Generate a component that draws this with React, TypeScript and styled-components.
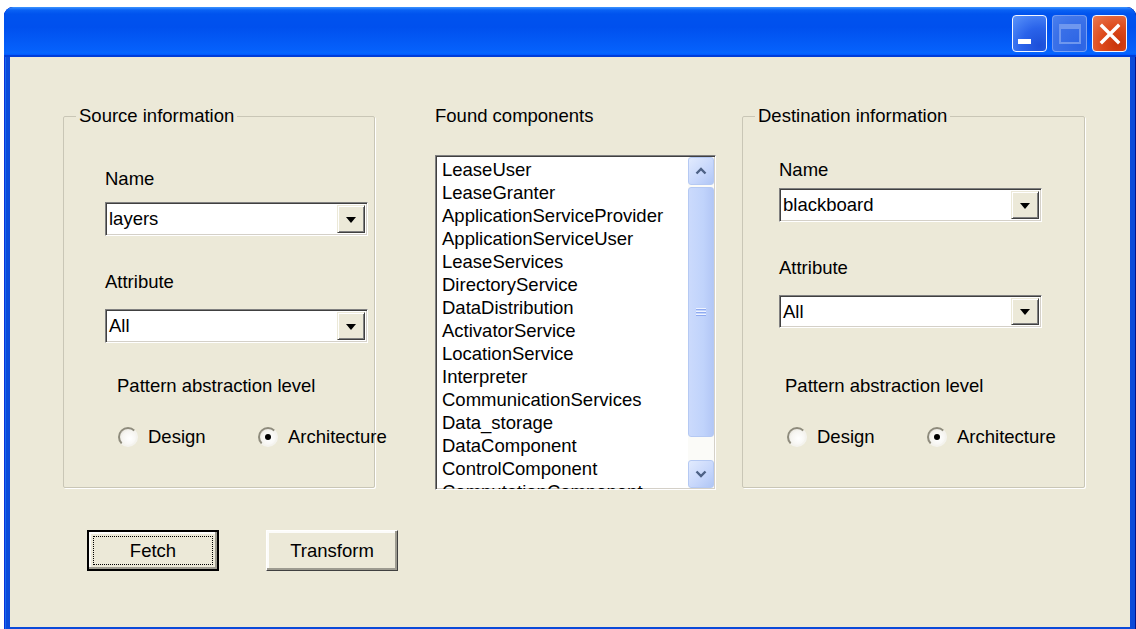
import React from "react";
import styled, { createGlobalStyle } from "styled-components";

const GlobalStyle = createGlobalStyle`
  html, body {
    margin: 0;
    padding: 0;
    background: #fff;
  }
  body {
    font-family: "Liberation Sans", Arial, sans-serif;
    font-size: 18.5px;
    color: #000;
  }
`;

const Window = styled.div`
  margin: 7px 0 0 4px;
  width: 1132px;
  height: 622px;
  box-sizing: border-box;
  padding: 0 6px 2px 6px;
  background: #0b4ad9;
  border-radius: 9px 9px 0 0;
  display: flex;
  flex-direction: column;
  overflow: hidden;
  box-shadow: inset 1px 0 0 #0831d9, inset -1px 0 0 #00138c, inset 2px 0 0 #166aee;
`;

const TitleBar = styled.div`
  margin: 0 -6px;
  height: 50px;
  box-sizing: border-box;
  padding: 8px 9px 0 0;
  display: flex;
  justify-content: flex-end;
  align-items: flex-start;
  gap: 5px;
  border-radius: 9px 9px 0 0;
  background: linear-gradient(
    180deg,
    #3d95ff 0%,
    #0a62f4 6%,
    #0053ee 14%,
    #0050ee 40%,
    #0560fb 85%,
    #0666ff 92%,
    #005bff 95%,
    #003dd7 97%,
    #003dd7 100%
  );
`;

const CaptionButton = styled.div<{ $kind: "min" | "max" | "close" }>`
  width: 35px;
  height: 37px;
  box-sizing: border-box;
  border-radius: 4px;
  display: flex;
  align-items: center;
  justify-content: center;
  border: 1.5px solid ${(p) => (p.$kind === "max" ? "rgba(190, 210, 255, 0.45)" : "#f4f6ff")};
  background: ${(p) =>
    p.$kind === "close"
      ? "radial-gradient(circle at 75% 80%, #c8340a 0%, #dd4a1c 45%, #ea7a52 100%)"
      : p.$kind === "max"
      ? "radial-gradient(circle at 80% 85%, #2c64e4 0%, #3a70e8 60%, #4a80ee 100%)"
      : "radial-gradient(circle at 80% 85%, #1c4fd8 0%, #2a63ea 45%, #5b95fb 100%)"};
`;

const MinimizeGlyph = styled.div`
  width: 13px;
  height: 5px;
  background: #fff;
  align-self: flex-end;
  margin: 0 10px 7px 0;
`;

const ClientArea = styled.div`
  flex: 1;
  background: #ece9d8;
  display: flex;
  flex-direction: column;
`;

const TopRow = styled.div`
  display: flex;
  align-items: flex-start;
  padding: 48px 0 0 53px;
`;

const GroupBox = styled.fieldset<{ $w: number; $ml: number }>`
  margin: 0 0 0 ${(p) => p.$ml}px;
  padding: 0;
  width: ${(p) => p.$w}px;
  height: 383px;
  box-sizing: border-box;
  border: 1px solid #c9c6b6;
  border-radius: 2px;
  box-shadow: 1px 1px 0 #fff;
  min-inline-size: 0;
`;

const Legend = styled.legend`
  margin-left: 12px;
  padding: 0 3px;
  line-height: 22px;
  font-size: 18.5px;
`;

const GroupBody = styled.div<{ $indent: number }>`
  padding-left: ${(p) => p.$indent}px;
  display: flex;
  flex-direction: column;
  align-items: flex-start;
`;

const FieldLabel = styled.div<{ $mt: number; $ml?: number }>`
  margin-top: ${(p) => p.$mt}px;
  margin-left: ${(p) => p.$ml ?? 0}px;
  line-height: 22px;
  white-space: nowrap;
`;

const Sunken = styled.div<{ $mt: number; $w: number; $h: number }>`
  margin-top: ${(p) => p.$mt}px;
  width: ${(p) => p.$w}px;
  height: ${(p) => p.$h}px;
  box-sizing: border-box;
  background: #fff;
  border: 1px solid;
  border-color: #808080 #fff #fff #808080;
  box-shadow: inset 1px 1px 0 #404040, inset -1px -1px 0 #d4d0c8;
  display: flex;
  overflow: hidden;
`;

const ComboText = styled.div`
  flex: 1;
  align-self: center;
  padding-left: 3px;
  line-height: 22px;
`;

const DropButton = styled.div`
  width: 28px;
  margin: 2px 2px 2px 0;
  box-sizing: border-box;
  background: #ece9d8;
  border: 1px solid;
  border-color: #ece9d8 #404040 #404040 #ece9d8;
  box-shadow: inset 1px 1px 0 #fff, inset -1px -1px 0 #808080;
  display: flex;
  align-items: center;
  justify-content: center;
`;

const DownTriangle = styled.div`
  width: 0;
  height: 0;
  border-left: 5px solid transparent;
  border-right: 5px solid transparent;
  border-top: 6px solid #000;
  margin-top: 1px;
`;

const RadioRow = styled.div<{ $mt: number; $ml: number }>`
  margin-top: ${(p) => p.$mt}px;
  margin-left: ${(p) => p.$ml}px;
  display: flex;
`;

const RadioItem = styled.div`
  width: 140px;
  display: flex;
  align-items: center;
  gap: 10px;
  line-height: 22px;
`;

const RadioDot = styled.div<{ $on: boolean }>`
  width: 20px;
  height: 20px;
  box-sizing: border-box;
  border-radius: 50%;
  border: 2px solid;
  border-color: #8e8b7c #f4f3ee #f4f3ee #8e8b7c;
  background: radial-gradient(circle at 60% 60%, #ffffff 0%, #f6f5f1 55%, #dcd9cc 100%);
  display: flex;
  align-items: center;
  justify-content: center;
  &::after {
    content: "";
    width: 6px;
    height: 6px;
    border-radius: 50%;
    background: ${(p) => (p.$on ? "#000" : "transparent")};
  }
`;

const ListColumn = styled.div`
  margin-left: 60px;
  width: 281px;
  display: flex;
  flex-direction: column;
`;

const ListLabel = styled.div`
  line-height: 22px;
`;

const ListItems = styled.div`
  flex: 1;
  padding: 2px 0 0 6px;
  overflow: hidden;
`;

const ListItem = styled.div`
  line-height: 23px;
  white-space: nowrap;
`;

const ScrollBar = styled.div`
  width: 26px;
  margin: 1px 1px 1px 0;
  background: #fbfbf8;
  display: flex;
  flex-direction: column;
  justify-content: space-between;
`;

const ScrollButton = styled.div`
  height: 28px;
  box-sizing: border-box;
  border: 1px solid #b5c9f3;
  border-radius: 3px;
  background: linear-gradient(135deg, #e2ebfe 0%, #c6d6fb 60%, #b0c6f5 100%);
  display: flex;
  align-items: center;
  justify-content: center;
`;

const ScrollThumb = styled.div`
  height: 250px;
  margin-top: 2px;
  box-sizing: border-box;
  border: 1px solid #b5c9f3;
  border-radius: 3px;
  background: linear-gradient(90deg, #cbdafc 0%, #c0d3fb 60%, #b3c7f6 100%);
  display: flex;
  align-items: center;
  justify-content: center;
`;

const Grip = styled.div`
  width: 10px;
  height: 9px;
  background: repeating-linear-gradient(180deg, #eef3ff 0 1px, #8faaf0 1px 2px, transparent 2px 3px);
`;

const ScrollGap = styled.div`
  flex: 1;
`;

const ButtonRow = styled.div`
  display: flex;
  gap: 47px;
  margin-top: 40px;
  padding-left: 77px;
`;

const PushButton = styled.div<{ $default?: boolean }>`
  position: relative;
  width: 132px;
  height: 41px;
  box-sizing: border-box;
  background: #ece9d8;
  display: flex;
  align-items: center;
  justify-content: center;
  line-height: 22px;
  border: ${(p) => (p.$default ? "2px solid #000" : "1px solid")};
  border-color: ${(p) => (p.$default ? "#000" : "#fff #404040 #404040 #fff")};
  box-shadow: inset -2px -2px 0 #9d9b90, inset 2px 2px 0 #fcfcfa;
  ${(p) =>
    p.$default &&
    `
    &::after {
      content: "";
      position: absolute;
      inset: 4px;
      border: 1px dotted #000;
    }
  `}
`;

const ArrowGlyph = ({ up }: { up?: boolean }) => (
  <svg width="12" height="8" viewBox="0 0 12 8">
    <path
      d={up ? "M1.5 6.5 L6 2 L10.5 6.5" : "M1.5 1.5 L6 6 L10.5 1.5"}
      fill="none"
      stroke="#4d6185"
      strokeWidth="2.4"
    />
  </svg>
);

type GroupLayout = {
  title: string;
  width: number;
  ml: number;
  indent: number;
  name: string;
  nameTop: number;
  comboGap: number;
  comboH: number;
  attrTop: number;
  combo2Gap: number;
  combo2H: number;
  patternTop: number;
  patternIndent: number;
  radioTop: number;
  radioIndent: number;
};

const ComboBox = ({ mt, h, value }: { mt: number; h: number; value: string }) => (
  <Sunken $mt={mt} $w={263} $h={h}>
    <ComboText>{value}</ComboText>
    <DropButton>
      <DownTriangle />
    </DropButton>
  </Sunken>
);

const InfoGroup = ({ g }: { g: GroupLayout }) => (
  <GroupBox $w={g.width} $ml={g.ml}>
    <Legend>{g.title}</Legend>
    <GroupBody $indent={g.indent}>
      <FieldLabel $mt={g.nameTop}>Name</FieldLabel>
      <ComboBox mt={g.comboGap} h={g.comboH} value={g.name} />
      <FieldLabel $mt={g.attrTop}>Attribute</FieldLabel>
      <ComboBox mt={g.combo2Gap} h={g.combo2H} value="All" />
      <FieldLabel $mt={g.patternTop} $ml={g.patternIndent}>
        Pattern abstraction level
      </FieldLabel>
      <RadioRow $mt={g.radioTop} $ml={g.radioIndent}>
        <RadioItem>
          <RadioDot $on={false} />
          Design
        </RadioItem>
        <RadioItem>
          <RadioDot $on />
          Architecture
        </RadioItem>
      </RadioRow>
    </GroupBody>
  </GroupBox>
);

const source: GroupLayout = {
  title: "Source information",
  width: 312,
  ml: 0,
  indent: 41,
  name: "layers",
  nameTop: 41,
  comboGap: 12,
  comboH: 34,
  attrTop: 35,
  combo2Gap: 16,
  combo2H: 34,
  patternTop: 32,
  patternIndent: 12,
  radioTop: 29,
  radioIndent: 13,
};

const destination: GroupLayout = {
  title: "Destination information",
  width: 343,
  ml: 26,
  indent: 36,
  name: "blackboard",
  nameTop: 32,
  comboGap: 7,
  comboH: 34,
  attrTop: 35,
  combo2Gap: 16,
  combo2H: 33,
  patternTop: 47,
  patternIndent: 6,
  radioTop: 29,
  radioIndent: 8,
};

const components = [
  "LeaseUser",
  "LeaseGranter",
  "ApplicationServiceProvider",
  "ApplicationServiceUser",
  "LeaseServices",
  "DirectoryService",
  "DataDistribution",
  "ActivatorService",
  "LocationService",
  "Interpreter",
  "CommunicationServices",
  "Data_storage",
  "DataComponent",
  "ControlComponent",
  "ComputationComponent",
];

export default function App() {
  return (
    <>
      <GlobalStyle />
      <Window>
        <TitleBar>
          <CaptionButton $kind="min">
            <MinimizeGlyph />
          </CaptionButton>
          <CaptionButton $kind="max">
            <svg width="22" height="20" viewBox="0 0 22 20">
              <rect x="1" y="1" width="20" height="18" fill="none" stroke="#6f97ee" strokeWidth="2" />
              <rect x="1" y="1" width="20" height="4" fill="#6f97ee" />
            </svg>
          </CaptionButton>
          <CaptionButton $kind="close">
            <svg width="22" height="22" viewBox="0 0 22 22">
              <path d="M3 3 L19 19 M19 3 L3 19" stroke="#fff" strokeWidth="3.4" strokeLinecap="square" />
            </svg>
          </CaptionButton>
        </TitleBar>
        <ClientArea>
          <TopRow>
            <InfoGroup g={source} />
            <ListColumn>
              <ListLabel>Found components</ListLabel>
              <Sunken $mt={28} $w={281} $h={335}>
                <ListItems>
                  {components.map((c) => (
                    <ListItem key={c}>{c}</ListItem>
                  ))}
                </ListItems>
                <ScrollBar>
                  <div>
                    <ScrollButton>
                      <ArrowGlyph up />
                    </ScrollButton>
                    <ScrollThumb>
                      <Grip />
                    </ScrollThumb>
                  </div>
                  <ScrollGap />
                  <ScrollButton>
                    <ArrowGlyph />
                  </ScrollButton>
                </ScrollBar>
              </Sunken>
            </ListColumn>
            <InfoGroup g={destination} />
          </TopRow>
          <ButtonRow>
            <PushButton $default>Fetch</PushButton>
            <PushButton>Transform</PushButton>
          </ButtonRow>
        </ClientArea>
      </Window>
    </>
  );
}
